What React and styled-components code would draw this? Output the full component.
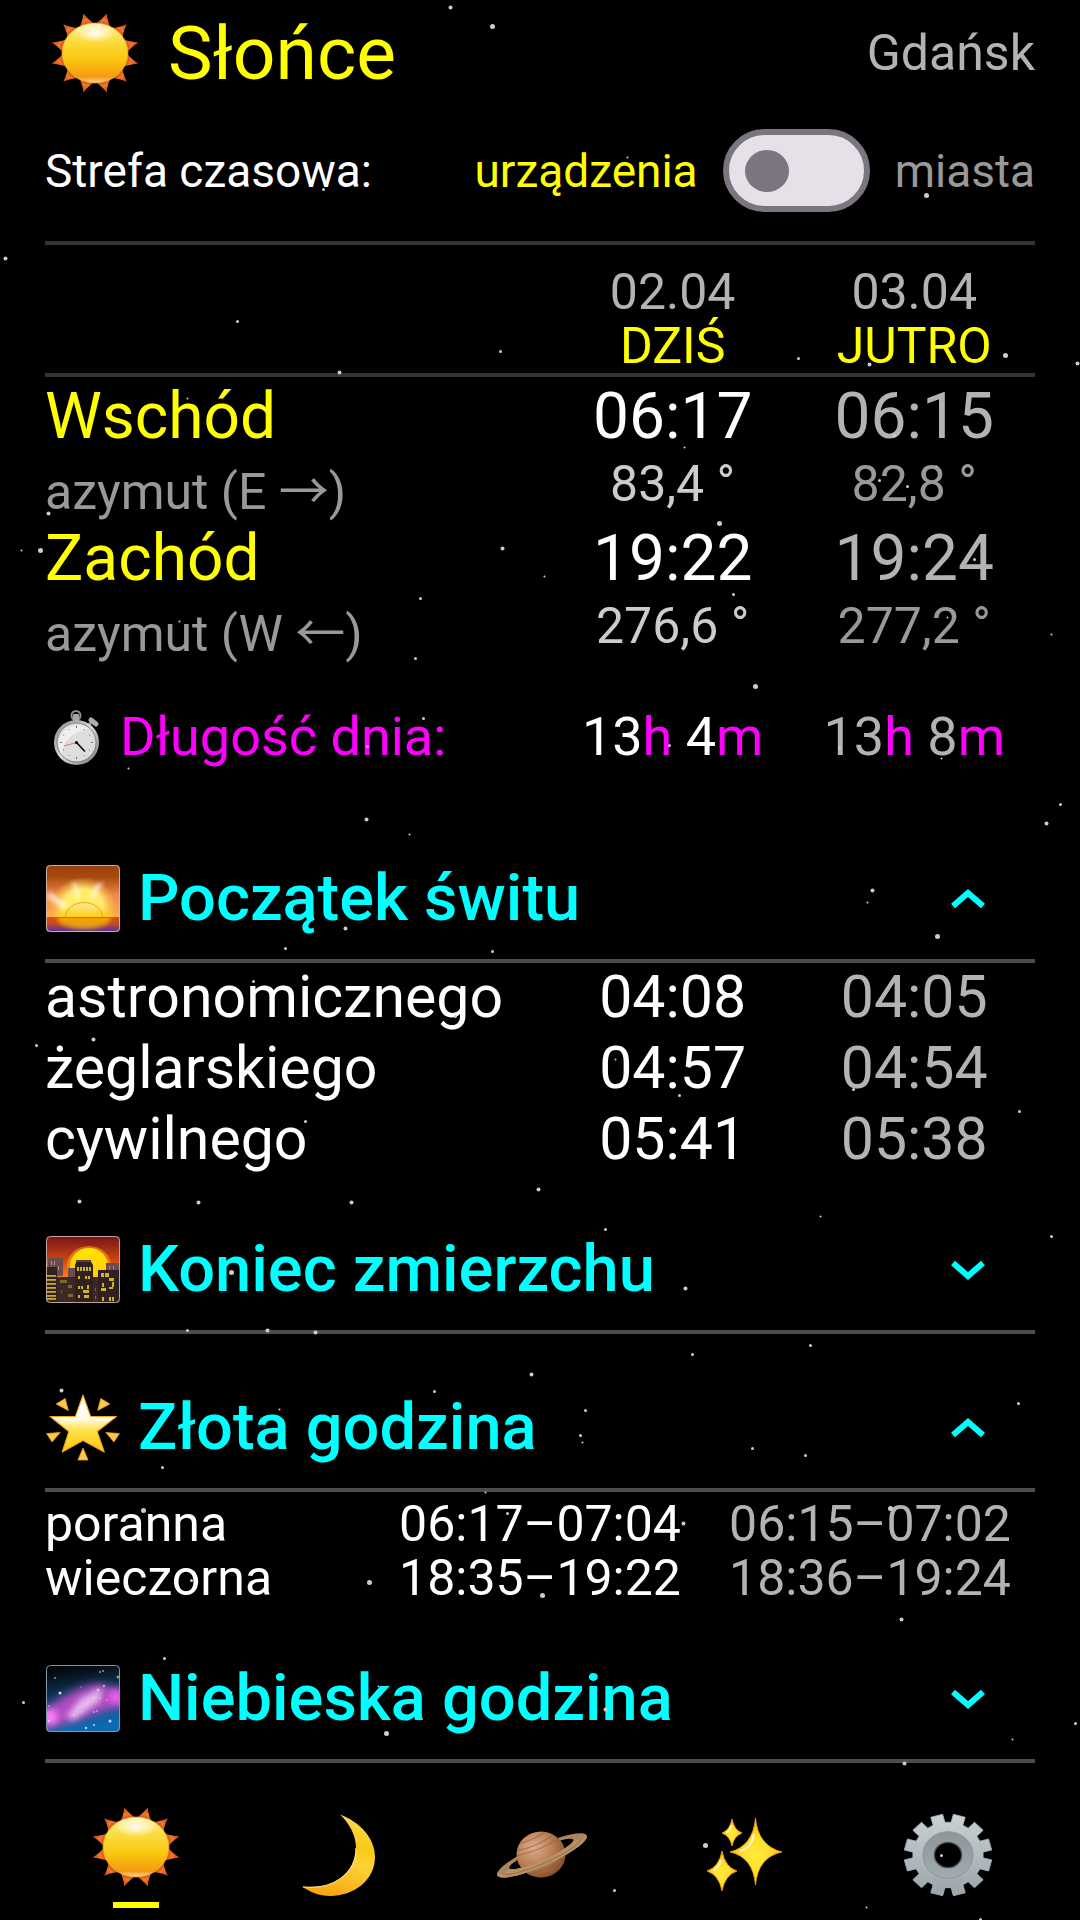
import React, { useId, useState } from "react";
import styled, { createGlobalStyle } from "styled-components";

const GlobalStyle = createGlobalStyle`
  * {
    box-sizing: border-box;
  }
  body {
    margin: 0;
    background: #000;
    color: #fff;
    font-family: Roboto, Inter, "DejaVu Sans", sans-serif;
    font-weight: 400;
  }
`;

// x, y, radius
const stars = [
  [450, 7, 2], [492, 26, 2.5], [323, 189, 1.5], [5, 258, 2], [237, 321, 1.5], [500, 351, 1.5],
  [339, 372, 2], [627, 157, 1], [926, 195, 2.5], [798, 358, 1.5], [869, 364, 2], [1005, 355, 2.5],
  [1077, 363, 2], [187, 398, 1], [48, 513, 2], [21, 550, 1], [40, 550, 2.5], [502, 548, 2],
  [420, 598, 1.5], [179, 621, 1], [415, 658, 1.5], [423, 718, 1.5], [367, 746, 1.5], [128, 768, 1],
  [684, 447, 1], [894, 435, 2], [879, 480, 1.5], [907, 486, 1.5], [936, 466, 1], [719, 523, 2.5],
  [544, 576, 1], [974, 559, 1.5], [733, 594, 1.5], [646, 612, 2], [947, 617, 1], [1051, 634, 1],
  [755, 686, 2.5], [669, 745, 1.5], [839, 747, 1.5], [941, 758, 1], [366, 819, 2], [409, 834, 1],
  [1060, 804, 1.5], [1046, 823, 2], [345, 928, 2], [285, 948, 1.5], [492, 951, 1.5], [253, 981, 1.5],
  [93, 1039, 2], [36, 1045, 1.5], [455, 1016, 1.5], [305, 1121, 1.5], [872, 890, 2], [867, 902, 1],
  [937, 936, 2.5], [615, 1059, 1], [679, 1095, 1.5], [853, 1089, 1.5], [1019, 1111, 1.5], [79, 1201, 2],
  [198, 1202, 2], [351, 1202, 2], [538, 1189, 2], [231, 1272, 2.5], [187, 1330, 1.5], [267, 1330, 2],
  [315, 1332, 2], [531, 1374, 2], [61, 1390, 2], [434, 1391, 1.5], [279, 1409, 1], [162, 1467, 1.5],
  [485, 1492, 1], [143, 1510, 2.5], [507, 1513, 1.5], [191, 1580, 1.5], [369, 1582, 2.5], [605, 1229, 1.5],
  [820, 1216, 1], [1051, 1236, 1.5], [685, 1288, 2], [692, 1354, 1.5], [810, 1345, 1.5], [1018, 1403, 1.5],
  [585, 1410, 1.5], [580, 1435, 1.5], [582, 1442, 1], [752, 1448, 1.5], [805, 1455, 1.5], [890, 1508, 2.5],
  [683, 1523, 2], [542, 1595, 2.5], [901, 1619, 2], [164, 1658, 1.5], [23, 1702, 1.5], [231, 1692, 1],
  [378, 1686, 1], [386, 1733, 2.5], [605, 1709, 2], [1075, 1723, 1.5], [1012, 1739, 1], [904, 1763, 2],
  [705, 1845, 2.5], [614, 1890, 1.5], [866, 1907, 1], [980, 1919, 1.5], [941, 1855, 1.5],
];

function point(radius, degrees) {
  const a = (degrees * Math.PI) / 180;
  return `${(radius * Math.cos(a)).toFixed(2)} ${(radius * Math.sin(a)).toFixed(2)}`;
}

function SunIcon() {
  const id = useId();
  const rays = [];
  for (let a = 15; a < 375; a += 30) {
    rays.push(`M${point(36, a - 16)} Q${point(39, a - 7)} ${point(51, a)} Q${point(39, a + 7)} ${point(36, a + 16)}Z`);
  }
  return (
    <svg width="88" height="80" viewBox="-50 -50 100 100" preserveAspectRatio="none" aria-hidden="true">
      <defs>
        <linearGradient id={id + "disc"} x1="0" y1="0" x2="0" y2="1">
          <stop offset="0" stopColor="#fff2b0" />
          <stop offset="0.25" stopColor="#fbe04a" />
          <stop offset="0.6" stopColor="#f9c80f" />
          <stop offset="0.9" stopColor="#f49a10" />
          <stop offset="1" stopColor="#ffd9a0" />
        </linearGradient>
        <radialGradient id={id + "shine"}>
          <stop offset="0" stopColor="#fff" stopOpacity="0.95" />
          <stop offset="1" stopColor="#fff" stopOpacity="0" />
        </radialGradient>
        <radialGradient id={id + "ray"} gradientUnits="userSpaceOnUse" cx="0" cy="0" r="51">
          <stop offset="0.7" stopColor="#c8430a" />
          <stop offset="0.82" stopColor="#f0782e" />
          <stop offset="1" stopColor="#c8460c" />
        </radialGradient>
      </defs>
      <path d={rays.join("")} fill={`url(#${id}ray)`} />
      <circle r="37.5" fill={`url(#${id}disc)`} stroke="#f5a623" strokeWidth="0.8" />
      <ellipse cx="0" cy="-25" rx="24" ry="12" fill={`url(#${id}shine)`} />
    </svg>
  );
}

function StopwatchIcon() {
  const ticks = [];
  for (let a = 0; a < 360; a += 30) {
    ticks.push(`M${point(16, a)} L${point(a % 90 ? 17 : 18.5, a)}`);
  }
  return (
    <svg width="47" height="55" viewBox="0 0 47 55" aria-hidden="true">
      <defs>
        <linearGradient id="watchRim" x1="0" y1="0" x2="1" y2="1">
          <stop offset="0" stopColor="#8b8b8b" />
          <stop offset="0.5" stopColor="#d8d8d8" />
          <stop offset="1" stopColor="#777" />
        </linearGradient>
      </defs>
      <circle cx="23" cy="5.5" r="4.5" fill="none" stroke="#8c8c8c" strokeWidth="2" />
      <rect x="20" y="4" width="6" height="8" rx="1" fill="#a5a5a5" />
      <path d="M36 15l3-4" stroke="#888" strokeWidth="3" />
      <path d="M38 10l5 4" stroke="#adadad" strokeWidth="5" strokeLinecap="round" />
      <circle cx="23.5" cy="32.5" r="21" fill="#dedede" stroke="url(#watchRim)" strokeWidth="3" />
      <circle cx="23.5" cy="32.5" r="19.5" fill="none" stroke="#666" strokeWidth="0.7" />
      <path d="M9 45C9 32 20 21 36 19A19 19 0 0 0 9 45Z" fill="#efefef" />
      <path d={ticks.join("")} transform="translate(23.5 32.5) scale(0.9)" stroke="#876" strokeWidth="1.3" />
      <path d="M11 36l12.5-3.500" stroke="#ff6c6c" strokeWidth="1.2" />
      <path d="M23 32l9 9.500" stroke="#111" strokeWidth="1.8" />
      <circle cx="23.5" cy="32.5" r="1.6" fill="#000" />
    </svg>
  );
}

function SunriseIcon() {
  return (
    <svg width="74" height="67" viewBox="0 0 74 67" aria-hidden="true">
      <defs>
        <linearGradient id="dawnSky" x1="0" y1="0" x2="0" y2="1">
          <stop offset="0" stopColor="#98400b" />
          <stop offset="0.18" stopColor="#a84a10" />
          <stop offset="0.45" stopColor="#f0894a" />
          <stop offset="0.78" stopColor="#fdb04a" />
        </linearGradient>
        <linearGradient id="dawnSea" x1="0" y1="0" x2="0" y2="1">
          <stop offset="0" stopColor="#e0500c" />
          <stop offset="0.45" stopColor="#c34a28" />
          <stop offset="1" stopColor="#4d2ba8" />
        </linearGradient>
        <radialGradient id="dawnGlow">
          <stop offset="0" stopColor="#fff04a" />
          <stop offset="0.6" stopColor="#fff070" stopOpacity="0.95" />
          <stop offset="1" stopColor="#ffc93c" stopOpacity="0" />
        </radialGradient>
        <linearGradient id="dawnSun" x1="0" y1="0" x2="0" y2="1">
          <stop offset="0" stopColor="#fde9a0" />
          <stop offset="1" stopColor="#ffcc10" />
        </linearGradient>
        <filter id="dawnSoft"><feGaussianBlur stdDeviation="2" /></filter>
        <clipPath id="dawnBox"><rect width="74" height="67" rx="4" /></clipPath>
      </defs>
      <g clipPath="url(#dawnBox)">
        <rect width="74" height="67" fill="url(#dawnSky)" />
        <ellipse cx="37" cy="42" rx="33" ry="30" fill="url(#dawnGlow)" />
        <g fill="#fff" opacity="0.65" filter="url(#dawnSoft)">
          <path d="M30 34L26 17l5 2 3 15z" />
          <path d="M44 33l5-13 9-4-10 18z" />
          <path d="M23 41L3 26l-2 7 17 11z" />
        </g>
        <rect y="52" width="74" height="15" fill="url(#dawnSea)" />
        <ellipse cx="38" cy="53" rx="27" ry="11" fill="#ffcc00" opacity="0.65" filter="url(#dawnSoft)" />
        <path d="M19 52.500C20 43 29 37.500 38 37.500S56 43 57 52.500Z" fill="url(#dawnSun)" stroke="#eda21e" />
        <path d="M0 52.500h74" stroke="#df5b0b" strokeWidth="0.8" />
      </g>
      <rect x="0.5" y="0.5" width="73" height="66" rx="4" fill="none" stroke="#d8b8a0" opacity="0.9" />
    </svg>
  );
}

function CityIcon() {
  const windows = [
    [31, 31, 14, 4], [32, 40, 2, 3], [39, 40, 5, 3], [32, 50, 5, 3], [41, 49, 2, 4], [37, 54, 6, 3],
    [32, 59, 2, 3], [38, 59, 5, 3], [55, 37, 8, 4], [63, 42, 5, 3], [56, 47, 2, 4], [66, 46, 2, 5],
    [55, 52, 5, 3], [63, 51, 4, 2], [56, 61, 2, 4], [63, 61, 5, 4],
  ];
  const dim = [[14, 44, 7, 3], [22, 49, 4, 3], [15, 54, 1, 3], [22, 58, 5, 3], [49, 52, 1, 3], [49, 60, 1, 3]];
  return (
    <svg width="74" height="67" viewBox="0 0 74 67" aria-hidden="true">
      <defs>
        <linearGradient id="duskSky" x1="0" y1="0" x2="0" y2="1">
          <stop offset="0" stopColor="#73141b" />
          <stop offset="0.3" stopColor="#bf3d12" />
          <stop offset="0.6" stopColor="#ff7a18" />
        </linearGradient>
        <linearGradient id="duskSun" x1="0" y1="0" x2="0" y2="1">
          <stop offset="0" stopColor="#ffe500" />
          <stop offset="1" stopColor="#ffc400" />
        </linearGradient>
        <clipPath id="duskBox"><rect width="74" height="67" rx="4" /></clipPath>
      </defs>
      <g clipPath="url(#duskBox)">
        <rect width="74" height="67" fill="url(#duskSky)" />
        <ellipse cx="43" cy="30" rx="22" ry="20" fill="#ff9b1a" opacity="0.6" />
        <ellipse cx="43" cy="30" rx="19" ry="18" fill="url(#duskSun)" />
        <path d="M2 22h15v18H2zM22 32h7v12h-7zM60 27h14v16H60z" fill="#6d4b4c" />
        <path d="M5 25h1v4h-1zM8 25h1v4h-1zM12 30h1v4h-1zM63 30h1v3h-1zM67 30h1v3h-1z" fill="#aa908c" />
        <path d="M11 41h18v26H11zM47 41h5v26h-5z" fill="#3d2828" />
        <path d="M0 31h11v36H0zM29 29l2-5h13l3 5v38H29zM52 34h22v33H52z" fill="#302020" />
        <path d="M30 24h15v2H30z" fill="#54403f" />
        {[39, 43, 47, 51, 55, 59, 62].map((y) => (
          <rect key={y} x="0" y={y} width="10" height="1.8" fill="#c4ab22" />
        ))}
        {windows.map(([x, y, w, h]) => (
          <rect key={`${x}-${y}`} x={x} y={y} width={w} height={h} fill="#cbb32c" />
        ))}
        <path d="M33.500 31v5M36.500 31v5M39.500 31v5M42.500 31v5M41.500 40v3M34.500 50v3M58.500 37v4M65.500 61v4" stroke="#302020" />
        {dim.map(([x, y, w, h]) => (
          <rect key={`${x}-${y}`} x={x} y={y} width={w} height={h} fill="#7d6826" />
        ))}
      </g>
      <rect x="0.5" y="0.5" width="73" height="66" rx="4" fill="none" stroke="#bda59a" />
    </svg>
  );
}

function GlowingStarIcon() {
  return (
    <svg width="74" height="67" viewBox="0 0 73 67" preserveAspectRatio="none" aria-hidden="true">
      <defs>
        <linearGradient id="starFill" x1="0" y1="0" x2="0" y2="1">
          <stop offset="0" stopColor="#ffe9a8" />
          <stop offset="0.2" stopColor="#fff" />
          <stop offset="0.42" stopColor="#fffbe6" />
          <stop offset="0.62" stopColor="#ffe04a" />
          <stop offset="1" stopColor="#fdc60c" />
        </linearGradient>
      </defs>
      <path
        d="M36.500 1L44 22.500H69.500L50.500 37.500 57.500 58 36.500 46.500 16 58 22.500 37.500 4 22.500H29Z"
        fill="url(#starFill)"
        stroke="#f2a51c"
        strokeLinejoin="round"
      />
      <path
        d="M10 10l9-5.500 3 12zM63 10l-9-5.500-3 12zM0.500 39.500l13.500-1-8 9.500zM72.500 39.500l-13.500-1 8 9.500zM36.500 54l-5 12h10z"
        fill="#fcc84a"
        stroke="#e9991c"
        strokeWidth="0.8"
      />
    </svg>
  );
}

function GalaxyIcon() {
  const dots = [
    [9, 13, 1], [54, 7, 1], [57, 6, 1], [72, 12, 1.5], [14, 28, 1.5], [58, 21, 1], [35, 22, 0.6], [52, 25, 1.2],
    [3, 41, 0.8], [64, 56, 1.5], [48, 60, 1], [40, 63, 1.2], [3, 56, 1.2], [28, 50, 1], [48, 33, 1], [61, 35, 0.7],
    [32, 42, 0.8], [48, 47, 0.8], [51, 46, 0.8], [36, 47, 0.7], [41, 39, 0.8], [54, 33, 0.8],
  ];
  return (
    <svg width="74" height="67" viewBox="0 0 74 67" aria-hidden="true">
      <defs>
        <linearGradient id="night" x1="0" y1="0" x2="0.2" y2="1">
          <stop offset="0" stopColor="#020203" />
          <stop offset="0.2" stopColor="#06121d" />
          <stop offset="0.5" stopColor="#0c3a5e" />
          <stop offset="1" stopColor="#0b6bb0" />
        </linearGradient>
        <filter id="mist" x="-30%" y="-60%" width="160%" height="220%"><feGaussianBlur stdDeviation="4" /></filter>
        <filter id="mistCore" x="-60%" y="-60%" width="220%" height="220%"><feGaussianBlur stdDeviation="3" /></filter>
        <clipPath id="nightBox"><rect width="74" height="67" rx="4" /></clipPath>
      </defs>
      <g clipPath="url(#nightBox)">
        <rect width="74" height="67" fill="url(#night)" />
        <path d="M-8 46C10 40 24 22 52 19L84 26V42C60 40 34 60 -8 64Z" fill="#b04cc0" filter="url(#mist)" />
        <circle cx="4" cy="52" r="8" fill="#f77df7" filter="url(#mistCore)" />
        <circle cx="70" cy="32" r="7" fill="#ea60ee" filter="url(#mistCore)" />
        <path d="M20 52L34 34 56 22 54 36 40 46 28 55Z" fill="#e7b7ef" filter="url(#mistCore)" />
        {dots.map(([x, y, r]) => (
          <circle key={`${x}-${y}`} cx={x} cy={y} r={r} fill={y < 15 ? "#a89a6a" : "#d9cfe6"} />
        ))}
      </g>
      <rect x="0.5" y="0.5" width="73" height="66" rx="4" fill="none" stroke="#8098a8" />
    </svg>
  );
}

function MoonIcon() {
  return (
    <svg width="74" height="83" viewBox="0 0 74 83" aria-hidden="true">
      <defs>
        <linearGradient id="moonFill" x1="0.5" y1="0" x2="0.3" y2="1">
          <stop offset="0" stopColor="#f9d84a" />
          <stop offset="0.35" stopColor="#fbc916" />
          <stop offset="0.55" stopColor="#fbd238" />
          <stop offset="1" stopColor="#faa50d" />
        </linearGradient>
      </defs>
      <path
        d="M38 .5C58 8 73 24 73 43 73 66 52 82 28 82 17 82 8 78 0 72.500 31 76 54 60 54 34 54 21 47 9 38 .5Z"
        fill="url(#moonFill)"
      />
      <path d="M1 73C31 76 54 60 54 34" fill="none" stroke="#ffe07a" strokeWidth="1.2" />
    </svg>
  );
}

function SaturnIcon() {
  return (
    <svg width="92" height="48" viewBox="0 0 92 48" aria-hidden="true">
      <defs>
        <radialGradient id="planet" cx="0.35" cy="0.35" r="0.75">
          <stop offset="0" stopColor="#dcae8e" />
          <stop offset="0.55" stopColor="#b97b52" />
          <stop offset="1" stopColor="#7d4824" />
        </radialGradient>
        <clipPath id="planetShape"><ellipse cx="45" cy="23.5" rx="24.5" ry="23" /></clipPath>
        <clipPath id="ringFront"><path d="M-60 1H60V30H-60Z" /></clipPath>
      </defs>
      <g transform="translate(45.5 23.5) rotate(-24)">
        <path
          d="M-49 1A49 10.500 0 0 1 49 1A49 10.500 0 0 1 -49 1ZM-35 -.5A35 6 0 0 0 35 -.5A35 6 0 0 0 -35 -.5Z"
          fill="#a98560"
          fillRule="evenodd"
        />
      </g>
      <ellipse cx="45" cy="23.5" rx="24.5" ry="23" fill="url(#planet)" />
      <g clipPath="url(#planetShape)" fill="none" stroke="#8f5934" strokeWidth="1.3" opacity="0.5">
        <path d="M18 20Q42 17 62 0M18 25Q44 21 66 5M20 13Q38 10 54 -2M24 44Q50 42 72 24M30 49Q54 46 73 30" />
      </g>
      <g transform="translate(45.5 23.5) rotate(-24)" clipPath="url(#ringFront)">
        <path
          d="M-49 1A49 10.500 0 0 1 49 1A49 10.500 0 0 1 -49 1ZM-35 -.5A35 6 0 0 0 35 -.5A35 6 0 0 0 -35 -.5Z"
          fill="#b98f66"
          fillRule="evenodd"
        />
        <path d="M-43 1A43 8 0 0 0 43 1" fill="none" stroke="#8e6c4b" strokeWidth="0.8" />
      </g>
    </svg>
  );
}

function SparklesIcon() {
  return (
    <svg width="76" height="74" viewBox="0 0 76 74" aria-hidden="true">
      <defs>
        <radialGradient id="spark" cx="0.5" cy="0.55" r="0.5">
          <stop offset="0" stopColor="#ffeb3b" />
          <stop offset="0.5" stopColor="#ffdf2e" />
          <stop offset="1" stopColor="#ffb70f" />
        </radialGradient>
      </defs>
      <g fill="url(#spark)" stroke="#f5a70f" strokeWidth="0.8">
        <path d="M48.500 0Q51 28 75 34 51 39 48.500 67 46 39 23 34 46 28 48.500 0Z" />
        <path d="M25 1Q27 12 35 15 27 18 25 28 23 18 15 15 23 12 25 1Z" />
        <path d="M15 33Q18 49 30 53 18 57 15 73 12 57 0 53 12 49 15 33Z" />
      </g>
      <path d="M47 16Q45 30 33 33M24.500 7Q23 13 19 14.500M14 42Q12 50 6 52.500" fill="none" stroke="#fff3b5" strokeWidth="2" />
    </svg>
  );
}

function GearIcon() {
  let outline = "";
  for (let a = 15; a < 375; a += 30) {
    outline += `${outline ? "L" : "M"}${point(40, a - 10)} L${point(50, a - 8)} L${point(50, a + 8)} L${point(40, a + 10)}`;
  }
  return (
    <svg width="88" height="82" viewBox="-50 -50 100 100" preserveAspectRatio="none" aria-hidden="true">
      <defs>
        <linearGradient id="steel" x1="0" y1="0" x2="0" y2="1">
          <stop offset="0" stopColor="#cbd2d6" />
          <stop offset="1" stopColor="#9aa4a9" />
        </linearGradient>
        <linearGradient id="steelRing" x1="0" y1="0" x2="0" y2="1">
          <stop offset="0" stopColor="#8d9599" />
          <stop offset="1" stopColor="#a2abb0" />
        </linearGradient>
      </defs>
      <path d={outline + "Z"} fill="url(#steel)" stroke="#a9b3b8" strokeLinejoin="round" />
      <circle r="28.5" fill="url(#steelRing)" stroke="#838b90" strokeWidth="0.8" />
      <circle r="15.5" fill="#000" stroke="#4d5357" strokeWidth="1.5" />
    </svg>
  );
}

function Chevron({ open }) {
  return (
    <svg width="36" height="20" viewBox="0 0 36 20" aria-hidden="true">
      <path d={open ? "M3 17L18 4 33 17" : "M3 3L18 16 33 3"} fill="none" stroke="#0ff" strokeWidth="6" />
    </svg>
  );
}

const Screen = styled.div`
  position: relative;
  min-height: 100vh;
  display: flex;
  flex-direction: column;
  background: #000;
`;

const Sky = styled.svg`
  position: absolute;
  inset: 0;
  width: 100%;
  height: 100%;
  pointer-events: none;
`;

const Content = styled.main`
  padding: 0 45px;
`;

const Header = styled.header`
  display: flex;
  align-items: center;
  justify-content: space-between;
  height: 105px;
`;

const Title = styled.h1`
  display: flex;
  align-items: center;
  gap: 29px;
  margin: 0;
  padding-left: 6px;
  color: #ff0;
  font-size: 75px;
  font-weight: 400;
  line-height: 80px;
`;

const City = styled.span`
  color: #b3b3b3;
  font-size: 50px;
  line-height: 56px;
`;

const ZoneRow = styled.div`
  display: flex;
  align-items: center;
  height: 140px;
  padding-bottom: 5px;
  border-bottom: 4px solid #333;
  font-size: 46px;
  line-height: 52px;
`;

const ZoneChoice = styled.div`
  display: flex;
  align-items: center;
  gap: 25px;
  margin-left: auto;
`;

const ZoneLabel = styled.label`
  color: ${(props) => (props.$active ? "#ff0" : "#999")};
`;

const Switch = styled.input`
  appearance: none;
  display: flex;
  align-items: center;
  width: 147px;
  height: 83px;
  margin: 0;
  padding: 0 16px;
  border: 6px solid #7a757f;
  border-radius: 42px;
  background: #e6e0e9;
  cursor: pointer;

  &::before {
    content: "";
    width: 44px;
    height: 42px;
    border-radius: 50%;
    background: #7a757f;
  }

  &:checked {
    justify-content: flex-end;
  }
`;

const Table = styled.table`
  width: 100%;
  border-collapse: separate;
  border-spacing: 0;
  table-layout: fixed;

  th,
  td {
    padding: 0;
    font-weight: 400;
    text-align: center;
  }

  tbody th {
    text-align: left;
    white-space: nowrap;
  }
`;

const LabelCol = styled.col`
  width: ${(props) => props.$width};
`;

const DayHead = styled.th`
  border-bottom: 4px solid #333;

  div {
    padding-top: 20px;
    color: #b3b3b3;
    font-size: 50px;
    line-height: 54px;
  }

  span {
    display: block;
    color: #ff0;
  }
`;

const EventRow = styled.tr`
  font-size: 64px;
  line-height: 76px;

  && th,
  && td {
    padding-top: 2px;
  }

  th {
    color: #ff0;
  }

  td + td {
    color: #b3b3b3;
  }
`;

const AzimuthRow = styled.tr`
  height: 64px;
  font-size: 50px;
  line-height: 54px;
  color: #999;

  th {
    vertical-align: bottom;
  }

  td {
    vertical-align: top;
    padding-top: 2px;
  }

  td:nth-child(2) {
    color: #ccc;
  }
`;

const Arrow = styled.span`
  font-family: "Noto Sans CJK JP", sans-serif;
  line-height: 1;
`;

const LengthRow = styled.tr`
  font-size: 54px;
  line-height: 60px;

  && th,
  && td {
    padding-top: 46px;
  }

  td + td {
    color: #b3b3b3;
  }
`;

const LengthLabel = styled.div`
  display: flex;
  align-items: center;
  gap: 20px;
  padding-left: 8px;
  color: #f0f;
`;

const Unit = styled.span`
  color: #f0f;
`;

const Sections = styled.div`
  padding-top: 38px;
`;

const SectionTitle = styled.h2`
  margin: 0;
  font-weight: 500;
`;

const SectionButton = styled.button`
  display: flex;
  align-items: center;
  gap: 18px;
  width: 100%;
  padding: 60px 49px 27px 1px;
  border: 0;
  border-bottom: 4px solid #4d4d4d;
  background: none;
  color: #0ff;
  font: inherit;
  font-size: 65px;
  line-height: 67px;
  text-align: left;
  cursor: pointer;
`;

const SectionName = styled.span`
  flex: 1;
`;

const TwilightRow = styled.tr`
  font-size: 59px;
  line-height: 67px;

  && th,
  && td {
    padding-bottom: 4px;
  }

  td + td {
    color: #b3b3b3;
  }
`;

const HourTable = styled(Table)`
  padding-top: 5px;
`;

const HourRow = styled.tr`
  font-size: 50px;
  line-height: 54px;

  td + td {
    color: #b3b3b3;
  }
`;

const Nav = styled.nav`
  display: flex;
  margin-top: auto;
  padding: 0 31px 12px 35px;
`;

const NavLink = styled.a`
  flex: 1;
  display: flex;
  flex-direction: column;
  align-items: center;
  justify-content: ${(props) => (props.$active ? "flex-end" : "center")};
  height: 106px;

  &::after {
    content: "";
    display: ${(props) => (props.$active ? "block" : "none")};
    width: 46px;
    height: 6px;
    margin-top: 15px;
    background: #ff0;
  }
`;

const dawnTimes = [
  ["astronomicznego", "04:08", "04:05"],
  ["żeglarskiego", "04:57", "04:54"],
  ["cywilnego", "05:41", "05:38"],
];

const goldenHours = [
  ["poranna", "06:17–07:04", "06:15–07:02"],
  ["wieczorna", "18:35–19:22", "18:36–19:24"],
];

const tabs = [
  { href: "#slonce", label: "Słońce", icon: <SunIcon /> },
  { href: "#ksiezyc", label: "Księżyc", icon: <MoonIcon /> },
  { href: "#planety", label: "Planety", icon: <SaturnIcon /> },
  { href: "#gwiazdy", label: "Gwiazdy", icon: <SparklesIcon /> },
  { href: "#ustawienia", label: "Ustawienia", icon: <GearIcon /> },
];

function Section({ icon, name, defaultOpen = false, children }) {
  const [open, setOpen] = useState(defaultOpen);
  return (
    <section>
      <SectionTitle>
        <SectionButton type="button" aria-expanded={open} onClick={() => setOpen(!open)}>
          {icon}
          <SectionName>{name}</SectionName>
          <Chevron open={open} />
        </SectionButton>
      </SectionTitle>
      {open && children}
    </section>
  );
}

function App() {
  const [cityZone, setCityZone] = useState(false);
  const [tab, setTab] = useState("#slonce");

  return (
    <>
      <GlobalStyle />
      <Screen>
        <Content>
          <Header>
            <Title>
              <SunIcon />
              Słońce
            </Title>
            <City>Gdańsk</City>
          </Header>

          <ZoneRow>
            <span>Strefa czasowa:</span>
            <ZoneChoice>
              <ZoneLabel htmlFor="zone" $active={!cityZone}>urządzenia</ZoneLabel>
              <Switch
                id="zone"
                type="checkbox"
                role="switch"
                checked={cityZone}
                onChange={(e) => setCityZone(e.target.checked)}
              />
              <ZoneLabel htmlFor="zone" $active={cityZone}>miasta</ZoneLabel>
            </ZoneChoice>
          </ZoneRow>

          <Table>
            <colgroup>
              <LabelCol $width="51.2%" />
              <col />
              <col />
            </colgroup>
            <thead>
              <tr>
                <DayHead />
                <DayHead scope="col"><div>02.04<span>DZIŚ</span></div></DayHead>
                <DayHead scope="col"><div>03.04<span>JUTRO</span></div></DayHead>
              </tr>
            </thead>
            <tbody>
              <EventRow>
                <th scope="row">Wschód</th>
                <td>06:17</td>
                <td>06:15</td>
              </EventRow>
              <AzimuthRow>
                <th scope="row">azymut (E <Arrow>→</Arrow>)</th>
                <td>83,4 °</td>
                <td>82,8 °</td>
              </AzimuthRow>
              <EventRow>
                <th scope="row">Zachód</th>
                <td>19:22</td>
                <td>19:24</td>
              </EventRow>
              <AzimuthRow>
                <th scope="row">azymut (W <Arrow>←</Arrow>)</th>
                <td>276,6 °</td>
                <td>277,2 °</td>
              </AzimuthRow>
              <LengthRow>
                <th scope="row">
                  <LengthLabel><StopwatchIcon />Długość dnia:</LengthLabel>
                </th>
                <td>13<Unit>h</Unit> 4<Unit>m</Unit></td>
                <td>13<Unit>h</Unit> 8<Unit>m</Unit></td>
              </LengthRow>
            </tbody>
          </Table>

          <Sections>
            <Section icon={<SunriseIcon />} name="Początek świtu" defaultOpen>
              <Table>
                <colgroup>
                  <LabelCol $width="51.2%" />
                  <col />
                  <col />
                </colgroup>
                <tbody>
                  {dawnTimes.map(([name, today, tomorrow]) => (
                    <TwilightRow key={name}>
                      <th scope="row">{name}</th>
                      <td>{today}</td>
                      <td>{tomorrow}</td>
                    </TwilightRow>
                  ))}
                </tbody>
              </Table>
            </Section>
            <Section icon={<CityIcon />} name="Koniec zmierzchu" />
            <Section icon={<GlowingStarIcon />} name="Złota godzina" defaultOpen>
              <HourTable>
                <tbody>
                  {goldenHours.map(([name, today, tomorrow]) => (
                    <HourRow key={name}>
                      <th scope="row">{name}</th>
                      <td>{today}</td>
                      <td>{tomorrow}</td>
                    </HourRow>
                  ))}
                </tbody>
              </HourTable>
            </Section>
            <Section icon={<GalaxyIcon />} name="Niebieska godzina" />
          </Sections>
        </Content>

        <Nav>
          {tabs.map(({ href, label, icon }) => (
            <NavLink
              key={href}
              href={href}
              aria-label={label}
              aria-current={tab === href ? "page" : undefined}
              $active={tab === href}
              onClick={() => setTab(href)}
            >
              {icon}
            </NavLink>
          ))}
        </Nav>

        <Sky viewBox="0 0 1080 1920" preserveAspectRatio="xMidYMin slice" aria-hidden="true">
          {stars.map(([x, y, r]) => (
            <circle key={`${x}-${y}`} cx={x + 0.5} cy={y + 0.5} r={r} fill="#ccc" />
          ))}
        </Sky>
      </Screen>
    </>
  );
}

export default App;
